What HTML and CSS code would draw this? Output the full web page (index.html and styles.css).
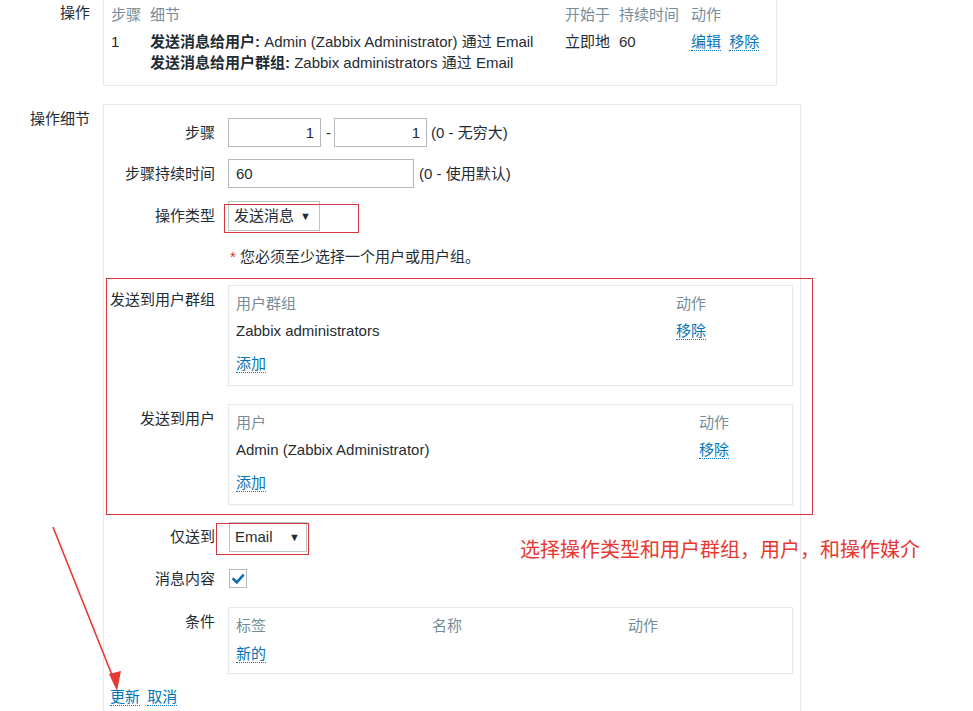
FILE: index.html
```html
<!DOCTYPE html>
<html lang="zh">
<head>
<meta charset="utf-8">
<title>操作</title>
<link rel="stylesheet" href="styles.css">
</head>
<body>
<div class="page">
  <div class="section ops-section">
    <div class="sec-label">操作</div>
    <div class="ops-box">
      <div class="ops-grid">
        <div class="th">步骤</div>
        <div class="th">细节</div>
        <div class="th">开始于</div>
        <div class="th">持续时间</div>
        <div class="th">动作</div>
        <div class="td">1</div>
        <div class="td"><b>发送消息给用户:</b> Admin (Zabbix Administrator) 通过 Email<br><b>发送消息给用户群组:</b> Zabbix administrators 通过 Email</div>
        <div class="td">立即地</div>
        <div class="td">60</div>
        <div class="td acts"><a class="lnk" href="#">编辑</a> <a class="lnk" href="#">移除</a></div>
      </div>
    </div>
  </div>

  <div class="section detail-section">
    <div class="sec-label">操作细节</div>
    <div class="detail-box">
      <div class="frow r1">
        <div class="flabel">步骤</div>
        <div class="field">
          <input class="inp inp-step" type="text" value="1">
          <span class="sep">-</span>
          <input class="inp inp-step" type="text" value="1">
          <span class="hint">(0 - 无穷大)</span>
        </div>
      </div>
      <div class="frow r2">
        <div class="flabel">步骤持续时间</div>
        <div class="field">
          <input class="inp inp-dur" type="text" value="60">
          <span class="hint h2">(0 - 使用默认)</span>
        </div>
      </div>
      <div class="frow r3">
        <div class="flabel">操作类型</div>
        <div class="field">
          <div class="sel sel-type"><span>发送消息</span><span class="arr">▼</span></div>
        </div>
      </div>
      <div class="frow r4">
        <div class="flabel"></div>
        <div class="note"><span class="star">*</span> 您必须至少选择一个用户或用户组。</div>
      </div>
      <div class="frow r5">
        <div class="flabel">发送到用户群组</div>
        <div class="tbox">
          <div class="tgrid g-groups">
            <div class="th2">用户群组</div><div class="th2">动作</div>
            <div class="tr">Zabbix administrators</div><div class="tr"><a class="lnk" href="#">移除</a></div>
          </div>
          <div class="tadd"><a class="lnk" href="#">添加</a></div>
        </div>
      </div>
      <div class="frow r6">
        <div class="flabel">发送到用户</div>
        <div class="tbox">
          <div class="tgrid g-users">
            <div class="th2">用户</div><div class="th2">动作</div>
            <div class="tr">Admin (Zabbix Administrator)</div><div class="tr"><a class="lnk" href="#">移除</a></div>
          </div>
          <div class="tadd"><a class="lnk" href="#">添加</a></div>
        </div>
      </div>
      <div class="frow r7">
        <div class="flabel">仅送到</div>
        <div class="field">
          <div class="sel sel-media"><span>Email</span><span class="arr">▼</span></div>
        </div>
      </div>
      <div class="frow r8">
        <div class="flabel">消息内容</div>
        <div class="field">
          <span class="chk"><svg width="16" height="16" viewBox="0 0 16 16"><path d="M3.5 8.2 L6.8 11.3 L12.8 4.6" fill="none" stroke="#0f6db5" stroke-width="2.6" stroke-linecap="square"/></svg></span>
        </div>
      </div>
      <div class="frow r9">
        <div class="flabel">条件</div>
        <div class="tbox cbox">
          <div class="tgrid g-cond">
            <div class="th2">标签</div><div class="th2">名称</div><div class="th2">动作</div>
          </div>
          <div class="cnew"><a class="lnk" href="#">新的</a></div>
        </div>
      </div>
      <div class="btns"><a class="lnk" href="#">更新</a> <a class="lnk" href="#">取消</a></div>
    </div>
  </div>

  <div class="mark m1"></div>
  <div class="mark m2"></div>
  <div class="mark m3"></div>
  <div class="annot">选择操作类型和用户群组，用户，和操作媒介</div>
  <svg class="arrow" width="973" height="711" viewBox="0 0 973 711">
    <line x1="53" y1="527" x2="114" y2="680" stroke="#e53935" stroke-width="1.6"/>
    <polygon points="117,691 109,674 121,671" fill="#e53935"/>
  </svg>
</div>
</body>
</html>
```

FILE: styles.css
```css
html, body {
  margin: 0;
  padding: 0;
  background: #ffffff;
}

.page {
  position: relative;
  width: 973px;
  height: 711px;
  overflow: hidden;
  font-family: "Liberation Sans", "Noto Sans CJK SC", sans-serif;
  font-size: 15px;
  line-height: 20px;
  color: #1f2c33;
}

.section {
  display: grid;
  grid-template-columns: 90px 1fr;
  column-gap: 13px;
  align-items: start;
}

.sec-label {
  text-align: right;
}

.ops-section .sec-label {
  line-height: 26px;
}

.ops-box {
  margin-top: -1px;
  width: 674px;
  box-sizing: border-box;
  border: 1px solid #e6e9eb;
  padding: 0 8px 12px 7px;
}

.ops-grid {
  display: grid;
  grid-template-columns: 39px 415px 54px 72px 1fr;
}

.th {
  line-height: 30px;
  color: #768d99;
  white-space: nowrap;
}

.td {
  line-height: 21px;
  padding-top: 1px;
  white-space: nowrap;
}

.td b {
  font-weight: bold;
}

.acts .lnk + .lnk {
  margin-left: 4px;
}

.lnk {
  color: #0275b8;
  text-decoration: none;
  border-bottom: 1px dotted #0275b8;
}

.detail-section {
  margin-top: 18px;
}

.detail-section .sec-label {
  line-height: 29px;
}

.detail-box {
  width: 698px;
  height: 620px;
  box-sizing: border-box;
  border: 1px solid #e6e9eb;
  border-bottom: none;
  padding-top: 13px;
}

.frow {
  display: grid;
  grid-template-columns: 111px 1fr;
  column-gap: 13px;
  align-items: start;
}

.flabel {
  text-align: right;
  line-height: 29px;
  white-space: nowrap;
}

.field {
  display: flex;
  align-items: center;
}

.r2 { margin-top: 12px; }
.r3 { margin-top: 13px; }
.r4 { margin-top: 16px; }
.r5 { margin-top: 18px; }
.r6 { margin-top: 18px; }
.r7 { margin-top: 17px; }
.r8 { margin-top: 17px; }
.r9 { margin-top: 19px; }

.r4 .flabel {
  line-height: 20px;
}

.r8 .flabel {
  line-height: 19px;
}

.inp {
  box-sizing: border-box;
  height: 29px;
  margin: 0;
  border: 1px solid #b3b9bc;
  border-radius: 0;
  background: #ffffff;
  font-family: "Liberation Sans", "Noto Sans CJK SC", sans-serif;
  font-size: 15px;
  color: #1f2c33;
  outline: none;
}

.inp-step {
  width: 93px;
  text-align: right;
  padding: 0 6px 0 4px;
}

.inp-dur {
  width: 186px;
  padding: 0 6px 0 7px;
}

.sep {
  margin: 0 3px 0 5px;
}

.hint {
  margin-left: 4px;
  white-space: nowrap;
}

.hint.h2 {
  margin-left: 5px;
}

.sel {
  box-sizing: border-box;
  height: 30px;
  border: 1px solid #b9c9bf;
  background: #ffffff;
  display: flex;
  align-items: center;
  justify-content: space-between;
  padding: 0 8px 0 5px;
  white-space: nowrap;
}

.sel-type {
  width: 92px;
}

.sel-media {
  width: 78px;
  margin-left: 1px;
  padding-right: 6px;
}

.arr {
  font-size: 11px;
  color: #1f2c33;
}

.note {
  line-height: 20px;
  padding-left: 2px;
  white-space: nowrap;
}

.star {
  color: #e0312b;
}

.tbox {
  width: 565px;
  box-sizing: border-box;
  border: 1px solid #e6e9eb;
  box-shadow: 0 1px 2px rgba(0, 0, 0, 0.04);
  padding: 6px 7px 10px 7px;
}

.tgrid {
  display: grid;
}

.g-groups {
  grid-template-columns: 440px 1fr;
}

.g-users {
  grid-template-columns: 463px 1fr;
}

.g-cond {
  grid-template-columns: 196px 196px 1fr;
}

.th2 {
  line-height: 22px;
  padding-top: 1px;
  color: #768d99;
}

.tr {
  line-height: 32px;
  white-space: nowrap;
}

.tadd {
  padding-top: 6px;
  line-height: 22px;
}

.cbox {
  padding-bottom: 8px;
}

.cnew {
  margin-top: 6px;
  line-height: 22px;
}

.chk {
  box-sizing: border-box;
  width: 18px;
  height: 19px;
  border: 1px solid #b3b9bc;
  display: flex;
  align-items: center;
  justify-content: center;
  margin-left: 1px;
}

.chk svg {
  display: block;
}

.btns {
  margin-top: 13px;
  padding-left: 6px;
  line-height: 20px;
}

.btns .lnk + .lnk {
  margin-left: 3px;
}

.mark {
  position: absolute;
  border: 1px solid #d8343f;
  box-sizing: border-box;
  pointer-events: none;
}

.m1 {
  left: 224px;
  top: 204px;
  width: 135px;
  height: 29px;
}

.m2 {
  left: 106px;
  top: 278px;
  width: 707px;
  height: 237px;
}

.m3 {
  left: 216px;
  top: 523px;
  width: 93px;
  height: 32px;
}

.annot {
  position: absolute;
  left: 520px;
  top: 538px;
  font-size: 20px;
  line-height: 24px;
  color: #e8382f;
  white-space: nowrap;
}

.arrow {
  position: absolute;
  left: 0;
  top: 0;
  pointer-events: none;
}
```
